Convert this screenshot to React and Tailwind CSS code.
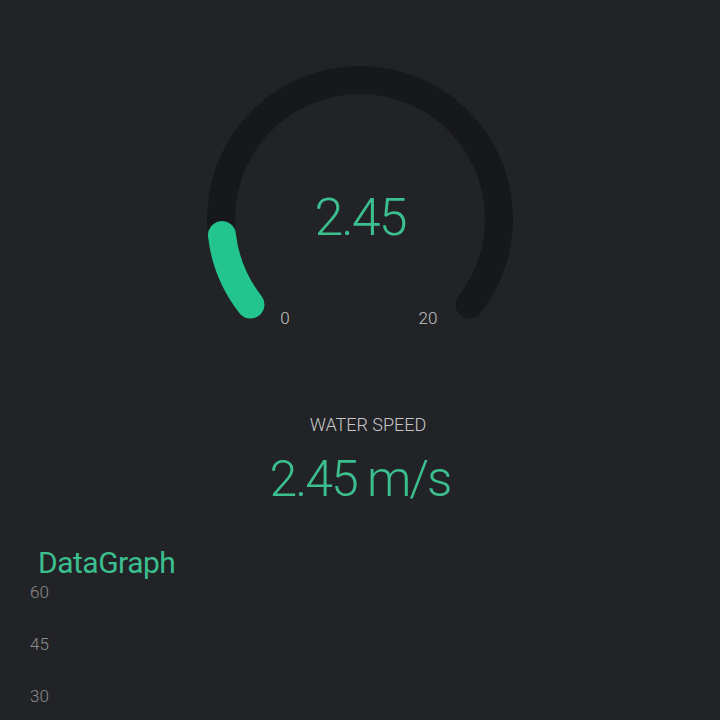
import React from 'react';

const font = { fontFamily: 'Roboto, "Liberation Sans", sans-serif' };

function Gauge({ value, min, max }) {
  // arc geometry, angles in screen degrees (clockwise from +x)
  const cx = 160;
  const cy = 169;
  const r = 139;
  const start = 142;
  const sweep = 256;
  const pt = (deg) => {
    const a = (deg * Math.PI) / 180;
    return [cx + r * Math.cos(a), cy + r * Math.sin(a)];
  };
  const [sx, sy] = pt(start);
  const [ex, ey] = pt(start + sweep);
  const frac = (value - min) / (max - min);
  const valDeg = sweep * frac;
  const [vx, vy] = pt(start + valDeg);

  return (
    <div className="relative w-[320px] h-[280px]">
      <svg width="320" height="280" viewBox="0 0 320 280">
        <path
          d={`M ${sx} ${sy} A ${r} ${r} 0 1 1 ${ex} ${ey}`}
          fill="none"
          stroke="#17181b"
          strokeWidth="28"
          strokeLinecap="round"
        />
        <path
          d={`M ${sx} ${sy} A ${r} ${r} 0 ${valDeg > 180 ? 1 : 0} 1 ${vx} ${vy}`}
          fill="none"
          stroke="#23c48e"
          strokeWidth="28"
          strokeLinecap="round"
        />
      </svg>
      <div className="absolute left-[77px] top-[259px] w-[16px] text-center text-[17px] leading-[18px] text-[#c4c4c4] font-light" style={font}>
        {min}
      </div>
      <div className="absolute left-[216px] top-[259px] w-[24px] text-center text-[17px] leading-[18px] text-[#c4c4c4] font-light" style={font}>
        {max}
      </div>
      <div className="absolute left-0 right-0 top-[142px] text-center text-[52px] leading-[52px] tracking-[-2px] text-[#3cbf8f] font-light" style={font}>
        {value.toFixed(2)}
      </div>
    </div>
  );
}

export default function App() {
  return (
    <div className="w-[720px] h-[720px] bg-[#222327] overflow-hidden flex flex-col" style={font}>
      <div className="flex justify-center pt-[50px]">
        <Gauge value={2.45} min={0} max={20} />
      </div>

      <div className="mt-[86px] pl-[16px] text-center text-[18px] leading-[18px] text-[#c7c7c7] font-light">
        WATER SPEED
      </div>
      <div className="mt-[19px] text-center text-[50px] leading-[52px] tracking-[-2px] text-[#3cbf8f] font-light">
        2.45 m/s
      </div>

      <div className="mt-[43px] pl-[38px] text-[30px] leading-[30px] tracking-[-0.5px] text-[#3cbf8f]">
        DataGraph
      </div>
      <div className="flex flex-col gap-[34px] pl-[30px] mt-[5px] text-[17px] leading-[18px] text-[#8c8c8c] font-light">
        <span>60</span>
        <span>45</span>
        <span>30</span>
      </div>
    </div>
  );
}
